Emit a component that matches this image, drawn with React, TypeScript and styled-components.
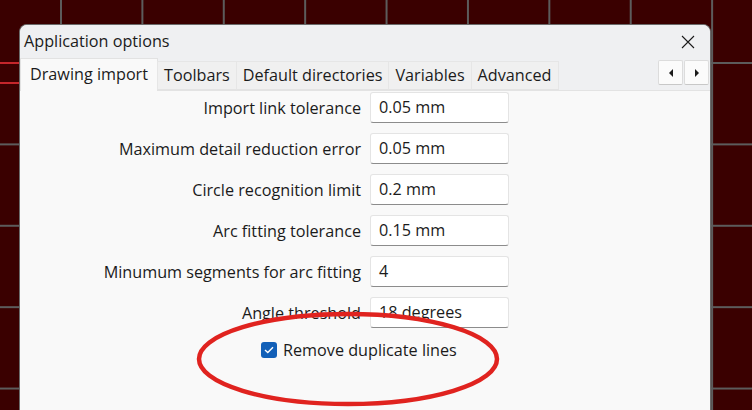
import { FC, Fragment } from 'react';
import styled, { createGlobalStyle } from 'styled-components';

const GlobalStyle = createGlobalStyle`
  html, body {
    margin: 0;
    padding: 0;
    overflow: hidden;
  }
  body {
    font-family: 'Open Sans', 'Noto Sans', sans-serif;
    color: #1b1b1b;
  }
`;

// dark CAD canvas behind the dialog, with its grid
const Desktop = styled.div`
  position: relative;
  width: 752px;
  height: 410px;
  overflow: hidden;
  box-sizing: border-box;
  padding: 24px 0 0 19px;
  background-color: #3a0000;
  background-image:
    linear-gradient(to right, #5c5c5c 0, #5c5c5c 2px, transparent 2px),
    linear-gradient(to bottom, #5c5c5c 0, #5c5c5c 2px, transparent 2px);
  background-size: 81.4px 81.4px;
  background-position: 60px 62px;
`;

const RedGuide = styled.div<{ top: number }>`
  position: absolute;
  left: 0;
  top: ${({ top }) => top}px;
  width: 22px;
  height: 2px;
  background: #c4262b;
`;

const Dialog = styled.div`
  position: relative;
  width: 692px;
  height: 400px;
  background: #f9f9f9;
  border: 1px solid #6a6a6a;
  border-bottom: none;
  border-radius: 8px 8px 0 0;
  box-sizing: border-box;
  overflow: hidden;
`;

const TitleBar = styled.div`
  height: 33px;
  display: flex;
  align-items: center;
  justify-content: space-between;
  padding: 0 12px 0 4px;
  background: #eff0f2;
`;

const Title = styled.span`
  font-size: 16.2px;
  padding-bottom: 1px;
`;

const CloseButton = styled.button`
  width: 20px;
  height: 20px;
  padding: 0;
  border: none;
  background: transparent;
  display: flex;
  align-items: center;
  justify-content: center;
`;

const TabStrip = styled.div`
  height: 32px;
  display: flex;
  align-items: flex-end;
  background: #eff0f2;
  border-bottom: 1px solid #e3e3e3;
  padding-right: 1px;
`;

const Tab = styled.div<{ active?: boolean }>`
  height: ${({ active }) => (active ? 33 : 29)}px;
  margin-bottom: ${({ active }) => (active ? -1 : 0)}px;
  box-sizing: border-box;
  display: flex;
  align-items: center;
  padding: 0 ${({ active }) => (active ? 9 : 6)}px ${({ active }) => (active ? 3 : 1)}px;
  font-size: 16.2px;
  background: ${({ active }) => (active ? '#f9f9f9' : '#f0f0f0')};
  border: 1px solid ${({ active }) => (active ? '#e2e2e2' : '#e6e6e6')};
  border-bottom: ${({ active }) => (active ? 'none' : '1px solid #e3e3e3')};
  margin-right: -1px;
  white-space: nowrap;
`;

const ArrowGroup = styled.div`
  margin-left: auto;
  align-self: flex-start;
  margin-top: 2px;
  display: flex;
  gap: 1px;
`;

const ArrowButton = styled.div`
  width: 25px;
  height: 25px;
  box-sizing: border-box;
  background: #fbfbfb;
  border: 1px solid #dcdcdc;
  border-bottom-color: #c8c8c8;
  border-radius: 2px;
  display: flex;
  align-items: center;
  justify-content: center;
`;

const Form = styled.div`
  display: grid;
  grid-template-columns: 341px 139px;
  column-gap: 9px;
  row-gap: 10px;
  padding-top: 1px;
  align-items: center;
`;

const Label = styled.label`
  text-align: right;
  font-size: 16.2px;
  white-space: nowrap;
`;

const Field = styled.div`
  height: 31px;
  box-sizing: border-box;
  background: #fff;
  border: 1px solid #e4e4e4;
  border-bottom: 1px solid #8c8c8c;
  border-radius: 3px;
  padding: 0 8px 1px;
  display: flex;
  align-items: center;
  font-size: 16.2px;
`;

const CheckRow = styled.div`
  grid-column: 1 / -1;
  display: flex;
  align-items: center;
  gap: 6px;
  padding-left: 241px;
  margin-top: 1px;
  font-size: 16.2px;
`;

const CheckBox = styled.span`
  width: 16px;
  height: 16px;
  border-radius: 3px;
  background: #1260b8;
  display: flex;
  align-items: center;
  justify-content: center;
`;

const Annotation = styled.svg`
  position: absolute;
  left: 0;
  top: 0;
  pointer-events: none;
`;

const rows = [
  ['Import link tolerance', '0.05 mm'],
  ['Maximum detail reduction error', '0.05 mm'],
  ['Circle recognition limit', '0.2 mm'],
  ['Arc fitting tolerance', '0.15 mm'],
  ['Minumum segments for arc fitting', '4'],
  ['Angle threshold', '18 degrees'],
];

const tabs = ['Drawing import', 'Toolbars', 'Default directories', 'Variables', 'Advanced'];

const App: FC = () => {
  return (
    <>
      <GlobalStyle />
      <Desktop>
        <RedGuide top={62} />
        <RedGuide top={82} />
        <Dialog>
          <TitleBar>
            <Title>Application options</Title>
            <CloseButton>
              <svg width="14" height="14" viewBox="0 0 14 14">
                <path d="M1 1L13 13M13 1L1 13" stroke="#1b1b1b" strokeWidth="1.1" fill="none" />
              </svg>
            </CloseButton>
          </TitleBar>
          <TabStrip>
            {tabs.map((t, i) => (
              <Tab key={t} active={i === 0}>
                {t}
              </Tab>
            ))}
            <ArrowGroup>
              <ArrowButton>
                <svg width="6" height="8" viewBox="0 0 6 8">
                  <path d="M5 0L1 4L5 8Z" fill="#1b1b1b" />
                </svg>
              </ArrowButton>
              <ArrowButton>
                <svg width="6" height="8" viewBox="0 0 6 8">
                  <path d="M1 0L5 4L1 8Z" fill="#1b1b1b" />
                </svg>
              </ArrowButton>
            </ArrowGroup>
          </TabStrip>
          <Form>
            {rows.map(([label, value]) => (
              <Fragment key={label}>
                <Label>{label}</Label>
                <Field>{value}</Field>
              </Fragment>
            ))}
            <CheckRow>
              <CheckBox>
                <svg width="10" height="8" viewBox="0 0 10 8">
                  <path d="M1 4L3.8 6.6L9 1.2" stroke="#fff" strokeWidth="1.4" fill="none" />
                </svg>
              </CheckBox>
              Remove duplicate lines
            </CheckRow>
          </Form>
        </Dialog>
        <Annotation width="752" height="410" viewBox="0 0 752 410">
          <ellipse cx="348" cy="359" rx="149" ry="45" fill="none" stroke="#e0231f" strokeWidth="4.5" />
        </Annotation>
      </Desktop>
    </>
  );
};

export default App;
